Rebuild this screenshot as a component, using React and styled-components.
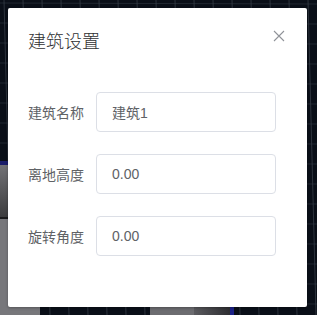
import React from 'react';
import styled, { createGlobalStyle } from 'styled-components';

const GlobalStyle = createGlobalStyle`
  html, body {
    margin: 0;
    padding: 0;
    width: 317px;
    height: 315px;
    overflow: hidden;
    background: #0a0f18;
    font-family: "Liberation Sans", "Noto Sans CJK SC", sans-serif;
  }
`

const Page = styled.div`
  position: relative;
  width: 317px;
  height: 315px;
  overflow: hidden;
`

const SceneSvg = styled.svg`
  display: block;
`

const Overlay = styled.div`
  position: absolute;
  inset: 0;
  padding: 8px 10px 8px 8px;
`

const Dialog = styled.div`
  position: relative;
  width: 299px;
  height: 299px;
  box-sizing: border-box;
  background: #fff;
  border-radius: 2px;
  box-shadow: 0 1px 3px rgba(0, 0, 0, 0.3);
`

const Header = styled.div`
  padding: 20px 20px 10px;
`

const Title = styled.span`
  display: block;
  font-size: 18px;
  font-weight: 300;
  line-height: 24px;
  color: #303133;
  font-family: "Noto Sans CJK SC", sans-serif;
`

const CloseButton = styled.button`
  position: absolute;
  top: 20px;
  right: 20px;
  width: 16px;
  height: 16px;
  padding: 0;
  border: none;
  background: transparent;
  cursor: pointer;
  display: flex;
  align-items: center;
  justify-content: center;
`

const Body = styled.div`
  padding: 30px 20px;
`

const FormItem = styled.div`
  display: flex;
  align-items: center;
  margin-bottom: 22px;
`

const Label = styled.label`
  width: 68px;
  padding-right: 12px;
  box-sizing: border-box;
  font-size: 14px;
  line-height: 40px;
  color: #606266;
  font-family: "Noto Sans CJK SC", sans-serif;
`

const Input = styled.input`
  width: 180px;
  height: 40px;
  box-sizing: border-box;
  padding: 0 15px;
  border: 1px solid #dcdfe6;
  border-radius: 4px;
  font-size: 14px;
  color: #606266;
  font-family: "Liberation Sans", "Noto Sans CJK SC", sans-serif;
  outline: none;
`

const fields = [
  { label: '建筑名称', value: '建筑1' },
  { label: '离地高度', value: '0.00' },
  { label: '旋转角度', value: '0.00' },
];

const Scene = () => {
  const verticals = [];
  for (let i = -2; i < 20; i++) {
    const x = i * 19 + 4;
    verticals.push(<line key={'v' + i} x1={x} y1={0} x2={x + 8} y2={315} stroke="#4a525c" strokeWidth="0.8" opacity="0.7" />);
  }
  const horizontals = [];
  for (let j = 0; j < 17; j++) {
    const y = j * 20 + 3;
    horizontals.push(<line key={'h' + j} x1={0} y1={y} x2={317} y2={y + 1} stroke="#3a424c" strokeWidth="0.8" opacity="0.6" />);
  }
  return (
    <SceneSvg width="317" height="315" viewBox="0 0 317 315">
      <defs>
        <linearGradient id="leftGray" x1="0" y1="0" x2="0" y2="1">
          <stop offset="0" stopColor="#727276" />
          <stop offset="1" stopColor="#3c3c3e" />
        </linearGradient>
        <linearGradient id="bottomGray" x1="0" y1="0" x2="1" y2="0">
          <stop offset="0" stopColor="#5a5a5e" />
          <stop offset="1" stopColor="#2e2e32" />
        </linearGradient>
      </defs>
      <rect width="317" height="315" fill="#0a0f18" />
      {verticals}
      {horizontals}
      <rect x="0" y="161" width="40" height="4" fill="#1a1d6a" />
      <rect x="0" y="165" width="40" height="52" fill="url(#leftGray)" />
      <rect x="0" y="217" width="40" height="2" fill="#1a1a1c" />
      <rect x="0" y="219" width="40" height="96" fill="#77777b" />
      <rect x="150" y="300" width="44" height="15" fill="#6c6c70" />
      <rect x="194" y="300" width="36" height="15" fill="url(#bottomGray)" />
      <rect x="230" y="300" width="4" height="15" fill="#1c2288" />
    </SceneSvg>
  );
};

const App = () => {
  return (
    <Page>
      <GlobalStyle />
      <Scene />
      <Overlay>
        <Dialog>
          <Header>
            <Title>建筑设置</Title>
          </Header>
          <CloseButton aria-label="close">
            <svg width="12" height="12" viewBox="0 0 12 12">
              <path d="M1 1L11 11M11 1L1 11" stroke="#909399" strokeWidth="1.1" fill="none" />
            </svg>
          </CloseButton>
          <Body>
            {fields.map((f) => (
              <FormItem key={f.label}>
                <Label>{f.label}</Label>
                <Input defaultValue={f.value} />
              </FormItem>
            ))}
          </Body>
        </Dialog>
      </Overlay>
    </Page>
  );
};

export default App;
